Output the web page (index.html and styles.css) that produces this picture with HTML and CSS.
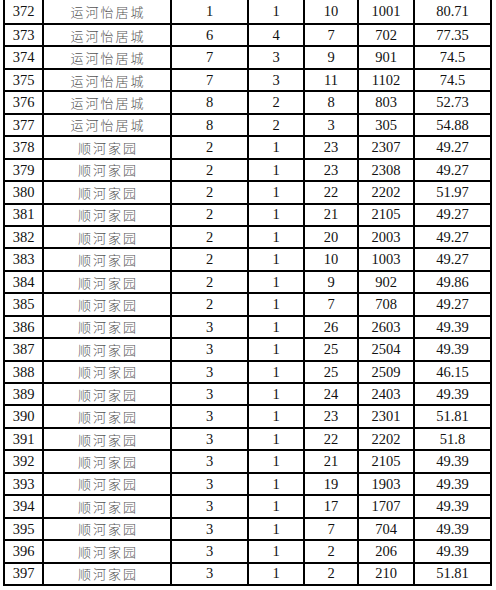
FILE: index.html
```html
<!DOCTYPE html>
<html lang="zh">
<head>
<meta charset="utf-8">
<link rel="stylesheet" href="styles.css">
</head>
<body>
<table class="sheet">
<tbody>
<tr><td>372</td><td class="cn">运河怡居城</td><td>1</td><td>1</td><td>10</td><td>1001</td><td>80.71</td></tr>
<tr><td>373</td><td class="cn">运河怡居城</td><td>6</td><td>4</td><td>7</td><td>702</td><td>77.35</td></tr>
<tr><td>374</td><td class="cn">运河怡居城</td><td>7</td><td>3</td><td>9</td><td>901</td><td>74.5</td></tr>
<tr><td>375</td><td class="cn">运河怡居城</td><td>7</td><td>3</td><td>11</td><td>1102</td><td>74.5</td></tr>
<tr><td>376</td><td class="cn">运河怡居城</td><td>8</td><td>2</td><td>8</td><td>803</td><td>52.73</td></tr>
<tr><td>377</td><td class="cn">运河怡居城</td><td>8</td><td>2</td><td>3</td><td>305</td><td>54.88</td></tr>
<tr><td>378</td><td class="cn">顺河家园</td><td>2</td><td>1</td><td>23</td><td>2307</td><td>49.27</td></tr>
<tr><td>379</td><td class="cn">顺河家园</td><td>2</td><td>1</td><td>23</td><td>2308</td><td>49.27</td></tr>
<tr><td>380</td><td class="cn">顺河家园</td><td>2</td><td>1</td><td>22</td><td>2202</td><td>51.97</td></tr>
<tr><td>381</td><td class="cn">顺河家园</td><td>2</td><td>1</td><td>21</td><td>2105</td><td>49.27</td></tr>
<tr><td>382</td><td class="cn">顺河家园</td><td>2</td><td>1</td><td>20</td><td>2003</td><td>49.27</td></tr>
<tr><td>383</td><td class="cn">顺河家园</td><td>2</td><td>1</td><td>10</td><td>1003</td><td>49.27</td></tr>
<tr><td>384</td><td class="cn">顺河家园</td><td>2</td><td>1</td><td>9</td><td>902</td><td>49.86</td></tr>
<tr><td>385</td><td class="cn">顺河家园</td><td>2</td><td>1</td><td>7</td><td>708</td><td>49.27</td></tr>
<tr><td>386</td><td class="cn">顺河家园</td><td>3</td><td>1</td><td>26</td><td>2603</td><td>49.39</td></tr>
<tr><td>387</td><td class="cn">顺河家园</td><td>3</td><td>1</td><td>25</td><td>2504</td><td>49.39</td></tr>
<tr><td>388</td><td class="cn">顺河家园</td><td>3</td><td>1</td><td>25</td><td>2509</td><td>46.15</td></tr>
<tr><td>389</td><td class="cn">顺河家园</td><td>3</td><td>1</td><td>24</td><td>2403</td><td>49.39</td></tr>
<tr><td>390</td><td class="cn">顺河家园</td><td>3</td><td>1</td><td>23</td><td>2301</td><td>51.81</td></tr>
<tr><td>391</td><td class="cn">顺河家园</td><td>3</td><td>1</td><td>22</td><td>2202</td><td>51.8</td></tr>
<tr><td>392</td><td class="cn">顺河家园</td><td>3</td><td>1</td><td>21</td><td>2105</td><td>49.39</td></tr>
<tr><td>393</td><td class="cn">顺河家园</td><td>3</td><td>1</td><td>19</td><td>1903</td><td>49.39</td></tr>
<tr><td>394</td><td class="cn">顺河家园</td><td>3</td><td>1</td><td>17</td><td>1707</td><td>49.39</td></tr>
<tr><td>395</td><td class="cn">顺河家园</td><td>3</td><td>1</td><td>7</td><td>704</td><td>49.39</td></tr>
<tr><td>396</td><td class="cn">顺河家园</td><td>3</td><td>1</td><td>2</td><td>206</td><td>49.39</td></tr>
<tr><td>397</td><td class="cn">顺河家园</td><td>3</td><td>1</td><td>2</td><td>210</td><td>51.81</td></tr>
</tbody>
</table>
</body>
</html>
```
FILE: styles.css
```css
html, body {
  margin: 0;
  padding: 0;
  background: #fff;
}
body {
  font-family: "Liberation Serif", "Noto Sans CJK SC", serif;
  font-size: 14.5px;
  color: #111;
}
.sheet {
  display: block;
  margin: 0 0 0 3px;
  width: 489px;
  box-sizing: border-box;
  background: #000;
  padding: 0 2px 2px;
  border-spacing: 0;
}
.sheet tbody {
  display: grid;
  grid-template-columns: 37px 126px 75px 54px 52px 54px 75px;
  grid-template-rows: 23px repeat(25, 20.44px);
  gap: 2px;
}
.sheet tr {
  display: contents;
}
.sheet td {
  background: #fff;
  padding: 0;
  display: flex;
  align-items: center;
  justify-content: center;
  line-height: 1;
  white-space: nowrap;
}
.sheet td.cn {
  font-family: "Noto Sans CJK SC", sans-serif;
  font-weight: 300;
  font-size: 13px;
  letter-spacing: 2px;
  padding-left: 2px;
  color: #555;
}
```
